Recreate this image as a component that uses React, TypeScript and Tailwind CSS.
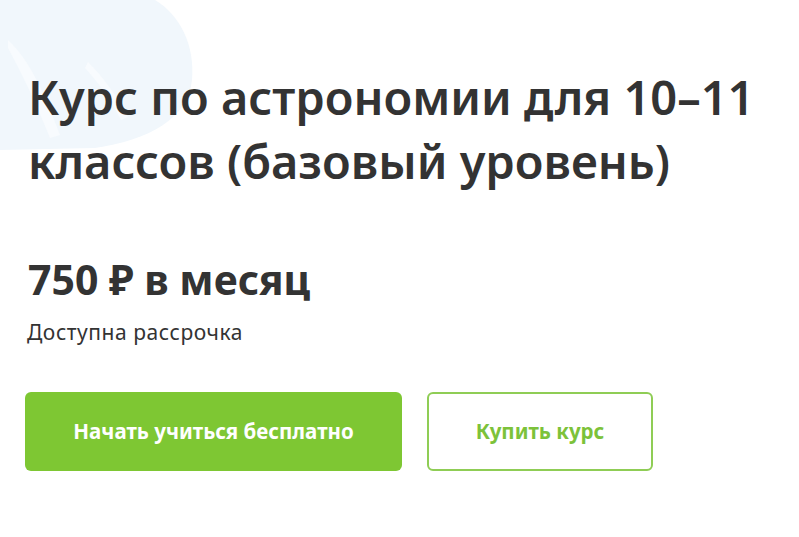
import React from "react";

export default function App() {
  return (
    <div className="relative w-[799px] h-[537px] overflow-hidden bg-white font-['Noto_Sans',sans-serif] text-[#333]">
      {/* faint decorative blob in the corner */}
      <svg className="absolute left-0 top-0" width="210" height="160" viewBox="0 0 210 160">
        <path d="M0 0 H155 C180 15 195 45 192 80 C188 118 150 140 95 148 L0 150 Z" fill="#f1f7fc" />
        <path d="M8 40 C30 60 45 95 60 135 L50 138 C35 100 20 70 8 48 Z" fill="#f8fbfe" />
        <path d="M88 62 C103 77 118 97 128 117 L121 120 C111 100 98 82 85 68 Z" fill="#f8fbfe" />
      </svg>

      <div className="relative pl-[25px] pt-[65px]">
        <h1 className="pl-[3px] text-[47px] leading-[64px] font-semibold">
          Курс по астрономии для 10–11
          <br />
          классов (базовый уровень)
        </h1>

        <div className="mt-[66px] pl-[3px] text-[41px] leading-none font-bold">750 ₽ в месяц</div>
        <div className="mt-[20px] pl-[2px] text-[21px] leading-6 tracking-[0.55px]">Доступна рассрочка</div>

        <div className="mt-[48px] flex gap-[25px]">
          <button className="flex h-[79px] w-[377px] items-center justify-center rounded-md bg-[#7ec733] text-[20.5px] font-bold text-white">
            Начать учиться бесплатно
          </button>
          <button className="flex h-[79px] w-[226px] items-center justify-center rounded-md border-2 border-[#8fcd55] bg-white text-[20.5px] font-bold text-[#7cc23a]">
            Купить курс
          </button>
        </div>
      </div>
    </div>
  );
}
